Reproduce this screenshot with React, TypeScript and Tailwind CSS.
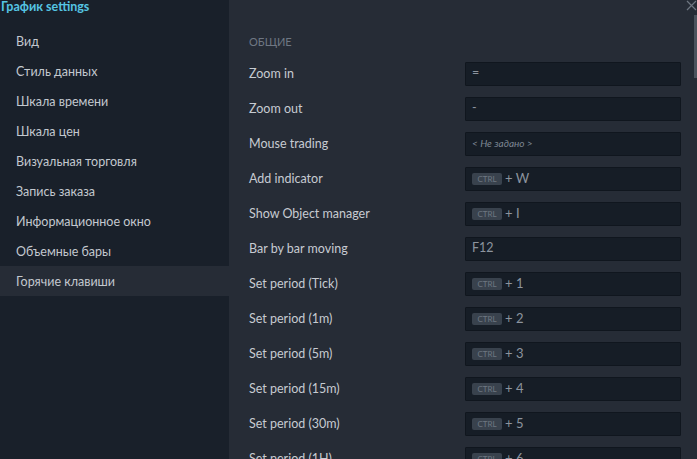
import { ReactNode } from "react";

type Hotkey = {
  label: string;
  ctrl?: boolean;
  value: ReactNode;
};

const sections = [
  "Вид",
  "Стиль данных",
  "Шкала времени",
  "Шкала цен",
  "Визуальная торговля",
  "Запись заказа",
  "Информационное окно",
  "Объемные бары",
  "Горячие клавиши",
];

const hotkeys: Hotkey[] = [
  { label: "Zoom in", value: "=" },
  { label: "Zoom out", value: "-" },
  {
    label: "Mouse trading",
    value: <span className="italic text-[10px] text-[#7d8692]">&lt; Не задано &gt;</span>,
  },
  { label: "Add indicator", ctrl: true, value: "W" },
  { label: "Show Object manager", ctrl: true, value: "I" },
  { label: "Bar by bar moving", value: "F12" },
  { label: "Set period (Tick)", ctrl: true, value: "1" },
  { label: "Set period (1m)", ctrl: true, value: "2" },
  { label: "Set period (5m)", ctrl: true, value: "3" },
  { label: "Set period (15m)", ctrl: true, value: "4" },
  { label: "Set period (30m)", ctrl: true, value: "5" },
  { label: "Set period (1H)", ctrl: true, value: "6" },
];

const App = () => {
  const active = "Горячие клавиши";

  return (
    <div
      className="flex h-[459px] w-[697px] overflow-hidden bg-[#262c36] text-[12.5px]"
      style={{ fontFamily: 'Lato, "Noto Sans", sans-serif' }}
    >
      {/* Sidebar */}
      <div className="w-[229px] shrink-0 bg-[#19202a]">
        <div className="h-[26px] pl-px text-[12.5px] leading-[13px] font-bold text-[#55c5e3]">
          График settings
        </div>
        {sections.map((s) => (
          <div
            key={s}
            className={`flex h-[30px] items-center pl-4 pt-[2px] text-[#c3c8cf] ${
              s === active ? "bg-[#262c36]" : ""
            }`}
          >
            {s}
          </div>
        ))}
      </div>

      {/* Content */}
      <div className="relative flex-1 pl-5 pt-[34px]">
        <button className="absolute right-0 top-0 text-[#6e7681]">
          <svg width="11" height="11" viewBox="0 0 11 11" stroke="currentColor" strokeWidth="1.2">
            <path d="M1 1L10 10M10 1L1 10" />
          </svg>
        </button>
        <div className="absolute right-0 top-[15px] h-[63px] w-[3px] bg-[#4b535d]" />

        <div className="flex h-4 items-center text-[11px] uppercase text-[#6f7783]">
          Общие
        </div>
        <div className="mt-[6px]">
          {hotkeys.map((hk) => (
            <div key={hk.label} className="flex h-[35px] items-center">
              <div className="w-[216px] pt-[1px] text-[#c6cbd2]">{hk.label}</div>
              <div className="flex h-6 w-[216px] items-center rounded-[1px] border border-[#10161e] bg-[#161d26] pl-[6px] text-[#8c949e]">
                {hk.ctrl && (
                  <span className="mr-[3px] flex h-3 w-[30px] items-center justify-center rounded-[2px] bg-[#39424d] text-[8px] text-[#6e7782]">
                    CTRL
                  </span>
                )}
                {hk.ctrl ? (
                  <span className="text-[13px]">+ {hk.value}</span>
                ) : (
                  hk.value
                )}
              </div>
            </div>
          ))}
        </div>
      </div>
    </div>
  );
};

export default App;
